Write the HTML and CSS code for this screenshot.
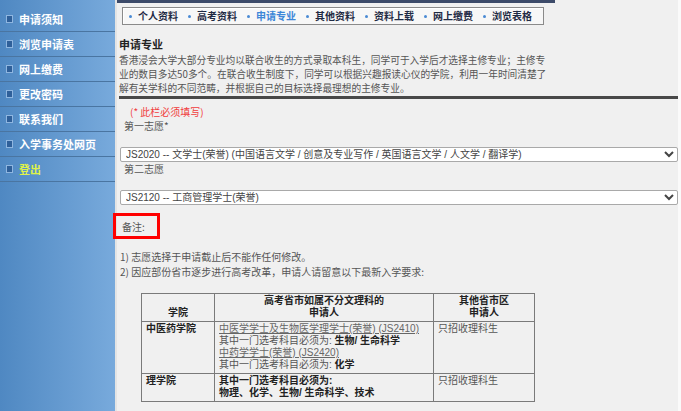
FILE: index.html
```html
<!DOCTYPE html>
<html lang="zh-CN">
<head>
    <meta charset="UTF-8">
    <title>申请专业</title>
    <link rel="stylesheet" href="styles.css">
</head>
<body>
<div class="page">
    <div class="sidebar">
        <div class="side-item"><span class="side-icon"></span>申请须知</div>
        <div class="side-item"><span class="side-icon"></span>浏览申请表</div>
        <div class="side-item"><span class="side-icon"></span>网上缴费</div>
        <div class="side-item"><span class="side-icon"></span>更改密码</div>
        <div class="side-item"><span class="side-icon"></span>联系我们</div>
        <div class="side-item"><span class="side-icon"></span>入学事务处网页</div>
        <div class="side-item logout"><span class="side-icon"></span>登出</div>
    </div>

    <div class="main">
        <div class="topline"></div>

        <div class="tabs">
            <span class="tab">个人资料</span>
            <span class="tab">高考资料</span>
            <span class="tab active">申请专业</span>
            <span class="tab">其他资料</span>
            <span class="tab">资料上载</span>
            <span class="tab">网上缴费</span>
            <span class="tab">浏览表格</span>
        </div>

        <h2 class="title">申请专业</h2>
        <p class="intro">香港浸会大学大部分专业均以联合收生的方式录取本科生，同学可于入学后才选择主修专业；主修专<br>业的数目多达50多个。在联合收生制度下，同学可以根据兴趣报读心仪的学院，利用一年时间清楚了<br>解有关学科的不同范畴，并根据自己的目标选择最理想的主修专业。</p>
        <div class="divider"></div>

        <div class="required">(* 此栏必须填写)</div>
        <div class="field-label">第一志愿*</div>
        <select class="choice">
            <option>JS2020 -- 文学士(荣誉) (中国语言文学 / 创意及专业写作 / 英国语言文学 / 人文学 / 翻译学)</option>
        </select>
        <div class="field-label">第二志愿</div>
        <select class="choice second">
            <option>JS2120 -- 工商管理学士(荣誉)</option>
        </select>

        <div class="remark">备注:</div>

        <ol class="notes">
            <li>1) 志愿选择于申请截止后不能作任何修改。</li>
            <li>2) 因应部份省市逐步进行高考改革，申请人请留意以下最新入学要求:</li>
        </ol>

        <table class="req">
            <thead>
                <tr>
                    <th class="col-school">学院</th>
                    <th class="col-mid">高考省市如属不分文理科的<br>申请人</th>
                    <th class="col-other">其他省市区<br>申请人</th>
                </tr>
            </thead>
            <tbody>
                <tr>
                    <td class="school">中医药学院</td>
                    <td>
                        <a class="prog">中医学学士及生物医学理学士(荣誉) (JS2410)</a><br>
                        其中一门选考科目必须为: <b>生物/ 生命科学</b><br>
                        <a class="prog">中药学学士(荣誉) (JS2420)</a><br>
                        其中一门选考科目必须为: <b>化学</b>
                    </td>
                    <td>只招收理科生</td>
                </tr>
                <tr>
                    <td class="school">理学院</td>
                    <td><b>其中一门选考科目必须为:<br>物理、化学、生物/ 生命科学、技术</b></td>
                    <td>只招收理科生</td>
                </tr>
            </tbody>
        </table>
    </div>
</div>
</body>
</html>
```

FILE: styles.css
```css
body {
    margin: 0;
    font-family: "Noto Sans CJK SC", "Liberation Sans", sans-serif;
    font-size: 10px;
    color: #555;
    background-color: #fafafa;
}
.page {
    display: flex;
    min-height: 411px;
}
.sidebar {
    width: 115px;
    flex: none;
    padding-top: 7px;
    background: linear-gradient(to right, #4f88c2, #78aadc);
    border-right: 2px solid #e4e4e4;
}
.side-item {
    display: flex;
    align-items: center;
    height: 24px;
    padding-left: 6px;
    border-bottom: 1px solid #4a75a1;
    color: #fff;
    font-weight: bold;
    font-size: 11px;
}
.side-icon {
    width: 5px;
    height: 6px;
    margin-right: 6px;
    background-color: #2f609a;
    border: 1px solid #8fb6e0;
}
.logout {
    color: #dff24a;
}
.main {
    flex: 1;
    margin-right: 3px;
    padding-left: 2px;
    padding-bottom: 10px;
    background-color: #f0f0f0;
}
.topline {
    width: 438px;
    height: 3px;
    margin-left: -2px;
    background-color: #3c4a69;
}
.tabs {
    display: flex;
    align-items: center;
    width: 414px;
    height: 16px;
    margin: 4px 0 0 3px;
    padding-left: 6px;
    border: 1px solid #8a8a8a;
    box-shadow: inset 1px 1px 0 #fff;
    background-color: #f7f7f7;
}
.tab {
    display: flex;
    flex: none;
    align-items: center;
    margin-right: 10px;
    font-weight: bold;
    white-space: nowrap;
    color: #1f2a44;
    line-height: 14px;
}
.tab::before {
    content: "";
    width: 3px;
    height: 3px;
    margin-right: 6px;
    border-radius: 50%;
    background-color: #4a8ad4;
}
.tab.active {
    color: #3d86d8;
}
.title {
    margin: 12px 0 0;
    font-size: 11px;
    line-height: 14px;
    color: #222;
}
.intro {
    margin: 2px 0 0;
    line-height: 14px;
    font-size: 9.7px;
    color: #555;
}
.divider {
    height: 3px;
    margin-top: 1px;
    background-color: #484848;
}
.required {
    margin: 6px 0 0 11px;
    line-height: 14px;
    color: #f03c3c;
}
.field-label {
    margin-left: 5px;
    line-height: 14px;
}
.choice {
    display: block;
    width: 558px;
    height: 15px;
    margin: 14px 0 0 1px;
    padding: 0 1px;
    font-family: "Liberation Sans", "Noto Sans CJK SC", sans-serif;
    font-size: 10px;
    color: #444;
    background-color: #fff;
    border: 1px solid #a9a9a9;
    border-radius: 2px;
}
.choice.second {
    margin-top: 14px;
}
.remark {
    width: 35px;
    height: 20px;
    margin: 8px 0 0 -6px;
    padding-left: 6px;
    border: 3px solid #f00;
    line-height: 21px;
}
.notes {
    list-style: none;
    margin: 10px 0 0 1px;
    padding: 0;
    line-height: 15px;
}
.req {
    margin: 14px 0 0 22px;
    width: 394px;
    border-collapse: collapse;
    font-family: "Liberation Sans", "Noto Sans CJK SC", sans-serif;
    line-height: 12px;
}
.req th,
.req td {
    border: 1px solid #7a7a7a;
    padding: 1px 4px 2px;
    text-align: left;
    vertical-align: top;
}
.req th {
    color: #222;
    text-align: center;
}
.req .col-school {
    width: 64px;
    vertical-align: bottom;
}
.req .col-mid {
    width: 210px;
}
.req td b,
.req .school {
    color: #222;
    font-weight: bold;
}
.prog {
    color: #666;
    text-decoration: underline;
}
```
